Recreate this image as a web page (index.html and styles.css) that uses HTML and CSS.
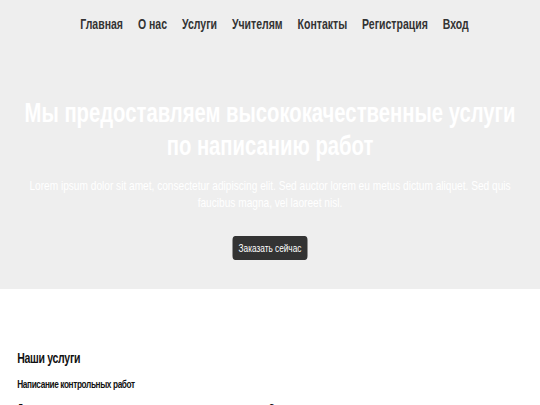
FILE: index.html
```html
<!DOCTYPE html>
<html lang="ru">
<head>
<meta charset="utf-8">
<link rel="stylesheet" href="styles.css">
</head>
<body>
<div class="page">
<header class="hero">
  <nav class="nav">
    <a href="#">Главная</a>
    <a href="#">О нас</a>
    <a href="#">Услуги</a>
    <a href="#">Учителям</a>
    <a href="#">Контакты</a>
    <a href="#">Регистрация</a>
    <a href="#">Вход</a>
  </nav>
  <div class="hero-body">
    <h1>Мы предоставляем высококачественные услуги по написанию работ</h1>
    <p>Lorem ipsum dolor sit amet, consectetur adipiscing elit. Sed auctor lorem eu metus dictum aliquet. Sed quis faucibus magna, vel laoreet nisl.</p>
    <a class="btn" href="#">Заказать сейчас</a>
  </div>
</header>
<section class="services">
  <h2>Наши услуги</h2>
  <h3>Написание контрольных работ</h3>
  <p>Лорем ипсум долор сит амет, консектетур адиписцинг элит. Сед ауктор лорем еу метус диктум аликует.</p>
</section>
</div>
</body>
</html>
```
FILE: styles.css
```css
* { box-sizing: border-box; }
html, body { overflow: hidden; }
body {
  margin: 0;
  font-family: "Liberation Sans", Arial, sans-serif;
  color: #333;
  background: #fff;
}
.page {
  width: 720px;
  transform: scaleX(0.75);
  transform-origin: 0 0;
}
.hero {
  background: #eeeeee;
  height: 289px;
  display: flex;
  flex-direction: column;
}
.nav {
  display: flex;
  justify-content: center;
  gap: 20px;
  padding-top: 15px;
  padding-left: 12px;
}
.nav a {
  color: #333;
  text-decoration: none;
  font-size: 14px;
  font-weight: bold;
  line-height: 18px;
}
.hero-body {
  display: flex;
  flex-direction: column;
  align-items: center;
  text-align: center;
  padding: 0 25px;
  margin-top: 64px;
}
.hero-body h1 {
  margin: 0;
  color: #fff;
  font-size: 27px;
  line-height: 33px;
  font-weight: bold;
}
.hero-body p {
  margin: 14px 0 0;
  color: #fff;
  font-size: 13.5px;
  line-height: 17px;
}
.btn {
  display: block;
  margin-top: 25px;
  background: #333;
  color: #fff;
  text-decoration: none;
  font-size: 11px;
  line-height: 24px;
  padding: 0 8px;
  border-radius: 4px;
}
.services {
  padding: 60px 23px 0;
}
.services h2 {
  margin: 0;
  font-size: 14px;
  letter-spacing: -0.4px;
  line-height: 18px;
  font-weight: bold;
  color: #111;
}
.services h3 {
  margin: 10px 0 0;
  font-size: 11px;
  letter-spacing: -0.5px;
  line-height: 14px;
  font-weight: bold;
  color: #111;
}
.services p {
  margin: 11px 0 0;
  font-size: 12px;
  color: #111;
}
```
